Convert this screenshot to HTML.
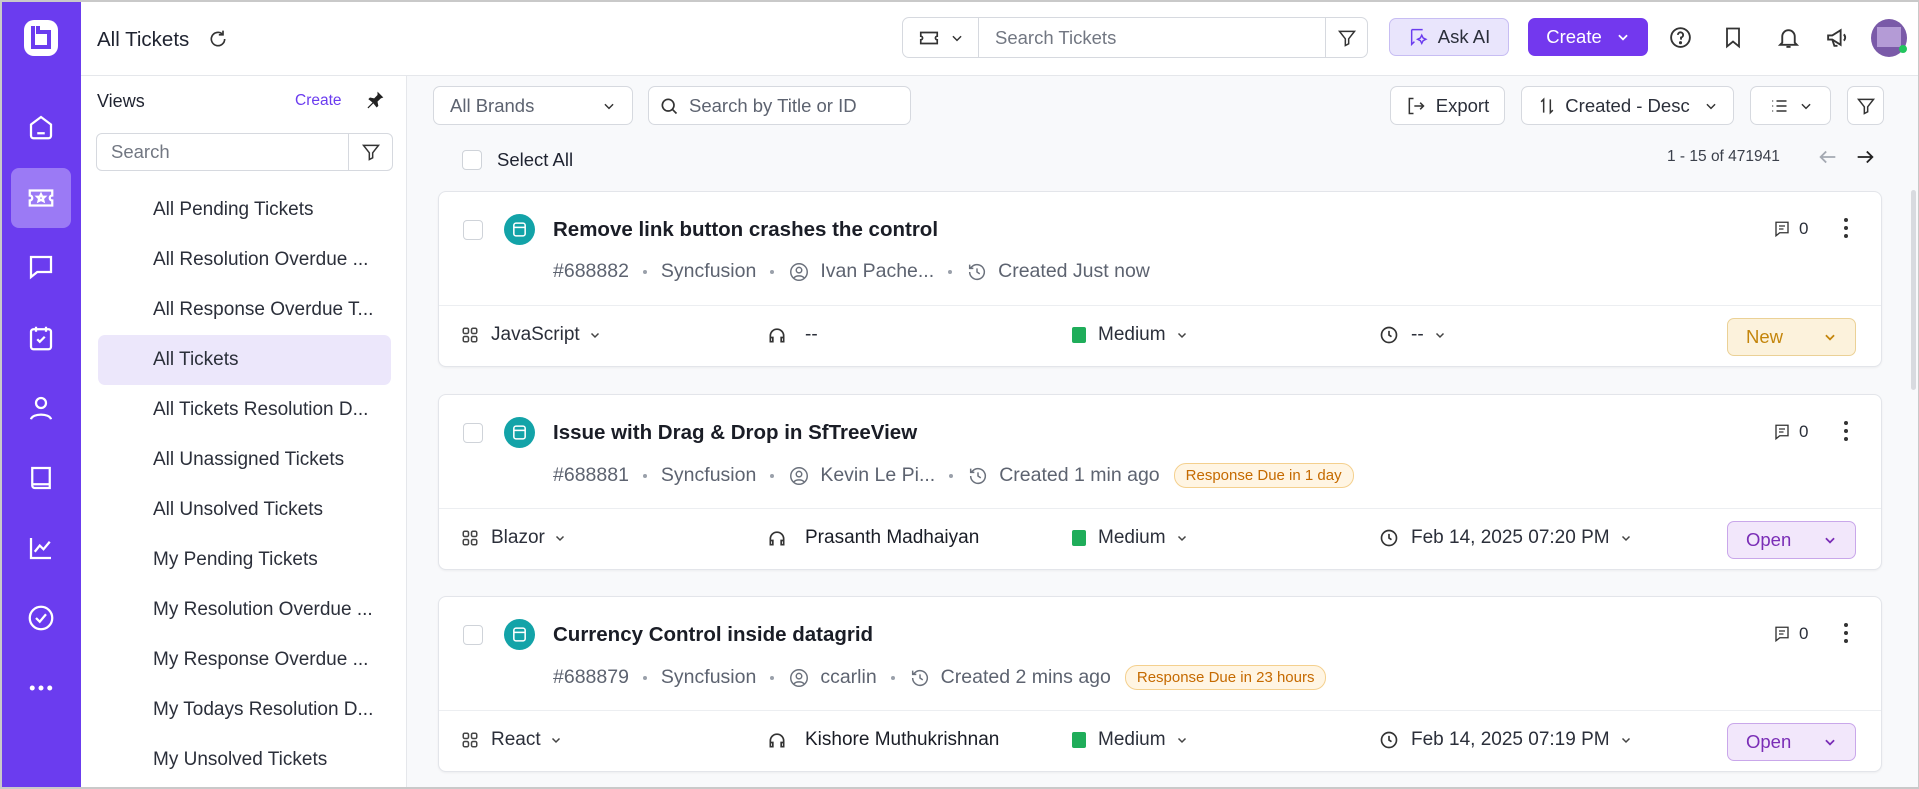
<!DOCTYPE html>
<html><head><meta charset="utf-8"><style>
*{box-sizing:border-box;margin:0;padding:0}
body{width:1919px;height:789px;overflow:hidden;font-family:"Liberation Sans",sans-serif;color:#1f2330;background:#fff;position:relative;font-size:17px}
.a{position:absolute}
svg{display:block}
.side{left:0;top:0;width:81px;height:789px;background:#6b3cef}
.side .ic{position:absolute;left:26px;width:30px;height:30px}
.hdr{left:81px;top:0;right:0;height:76px;border-bottom:1px solid #e5e7eb;background:#fff}
.btn{position:absolute;border:1px solid #d6d9df;border-radius:7px;background:#fff;display:flex;align-items:center;font-size:18.5px;color:#2b2f3a;white-space:nowrap}
.views{left:81px;top:76px;width:326px;height:713px;border-right:1px solid #e5e7eb;background:#fff}
.vi{position:absolute;left:17px;width:293px;height:50px;line-height:50px;padding-left:55px;font-size:19px;color:#2b2f3a;border-radius:7px;white-space:nowrap}
.main{left:407px;top:76px;right:0;bottom:0;background:#f8f9fb}
.card{position:absolute;left:438px;width:1444px;height:176px;background:#fff;border:1px solid #e3e5ea;border-radius:8px;box-shadow:0 1px 2px rgba(0,0,0,.05)}
.card .div{position:absolute;left:0;right:0;top:113px;border-top:1px solid #eceef1}
.cb{position:absolute;width:20px;height:20px;border:1px solid #cfd3d9;border-radius:4px;background:#fff}
.tic{position:absolute;left:65px;top:22px;width:31px;height:31px;border-radius:50%;background:#13a3a8}
.title{position:absolute;left:114px;top:26px;font-size:20.5px;font-weight:bold;color:#1a1d26;white-space:nowrap}
.meta{position:absolute;left:114px;top:68px;display:flex;align-items:center;font-size:19.5px;color:#5d6370;white-space:nowrap}
.meta .d{width:4px;height:4px;border-radius:50%;background:#9aa0aa;margin:0 14px}
.meta svg{margin-right:10px}
.badge{margin-left:14px;font-size:15px;color:#c56a00;background:#fff5e3;border:1px solid #f4d08e;border-radius:12px;padding:3px 11px}
.row{position:absolute;top:132px;font-size:19px;color:#2b2f3a;display:flex;align-items:center;white-space:nowrap}
.row svg{margin-right:12px}
.st{position:absolute;left:1288px;top:126px;width:129px;height:38px;border-radius:7px;display:flex;align-items:center;justify-content:space-between;padding:0 18px 0 18px;font-size:18.5px}
.new{background:#fcf2dc;border:1px solid #ebd196;color:#c4850b}
.open{background:#f2e7fb;border:1px solid #c9a7ea;color:#7a2db6}
.cm{position:absolute;left:1334px;top:27px;display:flex;align-items:center;font-size:17px;color:#2b2f3a}
.dots{position:absolute;left:1397px;top:24px}
</style></head><body>
<div style="position:absolute;inset:0;border:2px solid #c9c9c9;border-right-width:1px;pointer-events:none;z-index:9"></div>

<div class="a side">
 <svg class="a" style="left:22px;top:18px" width="38" height="40" viewBox="0 0 38 40"><rect x="2" y="2" width="34" height="36" rx="10" fill="#fff"/><path d="M11 8v21h16V14H16v-6" fill="none" stroke="#6b3cef" stroke-width="4"/></svg>
 <div class="a" style="left:11px;top:168px;width:60px;height:60px;border-radius:8px;background:#9b7af5"></div>
 <svg class="ic" style="top:112px" viewBox="0 0 24 24" fill="none" stroke="#fff" stroke-width="1.8"><path d="M4 10l8-6 8 6v9a2 2 0 0 1-2 2H6a2 2 0 0 1-2-2z"/><path d="M9 17h6"/></svg>
 <svg class="ic" style="top:183px" viewBox="0 0 24 24" fill="none" stroke="#fff" stroke-width="1.8"><path d="M3 6h18v4a2 2 0 0 0 0 4v4H3v-4a2 2 0 0 0 0-4z"/><path d="M12 9l1 2h2l-1.5 1.5.5 2-2-1-2 1 .5-2L9 11h2z"/></svg>
 <svg class="ic" style="top:252px" viewBox="0 0 24 24" fill="none" stroke="#fff" stroke-width="1.8"><path d="M4 4h16v12H9l-5 4z"/></svg>
 <svg class="ic" style="top:323px" viewBox="0 0 24 24" fill="none" stroke="#fff" stroke-width="1.8"><rect x="4" y="5" width="16" height="16" rx="2"/><path d="M8 3v4M16 3v4M9 13l2 2 4-4"/></svg>
 <svg class="ic" style="top:393px" viewBox="0 0 24 24" fill="none" stroke="#fff" stroke-width="1.8"><circle cx="12" cy="8" r="4"/><path d="M4 21c1-5 15-5 16 0"/></svg>
 <svg class="ic" style="top:463px" viewBox="0 0 24 24" fill="none" stroke="#fff" stroke-width="1.8"><path d="M5 4h14v16H7a2 2 0 0 1-2-2z"/><path d="M5 17h14"/></svg>
 <svg class="ic" style="top:533px" viewBox="0 0 24 24" fill="none" stroke="#fff" stroke-width="1.8"><path d="M4 4v16h16"/><path d="M7 15l4-5 3 3 5-6"/></svg>
 <svg class="ic" style="top:603px" viewBox="0 0 24 24" fill="none" stroke="#fff" stroke-width="1.8"><circle cx="12" cy="12" r="9"/><path d="M8 12l3 3 5-6"/></svg>
 <svg class="ic" style="top:673px" viewBox="0 0 24 24" fill="#fff"><circle cx="5" cy="12" r="2"/><circle cx="12" cy="12" r="2"/><circle cx="19" cy="12" r="2"/></svg>
</div>

<div class="a hdr">
 <div class="a" style="left:16px;top:28px;font-size:20.5px;color:#1f2330">All Tickets</div>
 <svg class="a" style="left:127px;top:29px" width="20" height="20" viewBox="0 0 24 24" fill="none" stroke="#333" stroke-width="2"><path d="M20 12a8 8 0 1 1-3-6.2"/><path d="M18 2v5h-5"/></svg>
</div>
<div class="btn" style="left:902px;top:17px;width:466px;height:41px">
 <div style="width:76px;height:100%;border-right:1px solid #d6d9df;display:flex;align-items:center;justify-content:center;gap:10px">
  <svg width="22" height="22" viewBox="0 0 24 24" fill="none" stroke="#333" stroke-width="1.8"><path d="M3 6h18v4a2 2 0 0 0 0 4v4H3v-4a2 2 0 0 0 0-4z"/></svg>
  <svg width="14" height="14" viewBox="0 0 24 24" fill="none" stroke="#333" stroke-width="2.5"><path d="M5 9l7 7 7-7"/></svg></div>
 <div style="flex:1;padding-left:16px;color:#727782">Search Tickets</div>
 <div style="width:42px;height:100%;border-left:1px solid #d6d9df;display:flex;align-items:center;justify-content:center"><svg width="20" height="20" viewBox="0 0 24 24" fill="none" stroke="#333" stroke-width="1.8"><path d="M3 4h18l-7 9v6l-4 2v-8z"/></svg></div>
</div>
<div class="btn" style="left:1389px;top:18px;width:120px;height:38px;background:#e9e5fc;border-color:#c7bdf3;justify-content:center;gap:8px">
 <svg width="22" height="22" viewBox="0 0 24 24" fill="none" stroke="#6b3cef" stroke-width="1.6"><path d="M4 4h12M4 4v16l3-3"/><path d="M15 10l1.5 3 3 1.5-3 1.5-1.5 3-1.5-3-3-1.5 3-1.5z"/></svg><span>Ask AI</span></div>
<div class="btn" style="left:1528px;top:18px;width:120px;height:38px;background:#7338ee;border-color:#7338ee;color:#fff;justify-content:center;gap:14px"><span>Create</span><svg width="14" height="14" viewBox="0 0 24 24" fill="none" stroke="#fff" stroke-width="3"><path d="M5 9l7 7 7-7"/></svg></div>
<svg class="a" style="left:1668px;top:25px" width="25" height="25" viewBox="0 0 24 24" fill="none" stroke="#333" stroke-width="1.8"><circle cx="12" cy="12" r="9"/><path d="M9.5 9.5a2.5 2.5 0 1 1 3 2.5v2"/><circle cx="12" cy="17" r=".6" fill="#333"/></svg>
<svg class="a" style="left:1721px;top:25px" width="24" height="25" viewBox="0 0 24 24" fill="none" stroke="#333" stroke-width="1.8"><path d="M6 3h12v18l-6-5-6 5z"/></svg>
<svg class="a" style="left:1776px;top:25px" width="25" height="25" viewBox="0 0 24 24" fill="none" stroke="#333" stroke-width="1.8"><path d="M6 17V11a6 6 0 0 1 12 0v6l2 2H4z"/><path d="M10 21h4"/></svg>
<svg class="a" style="left:1825px;top:25px" width="25" height="25" viewBox="0 0 24 24" fill="none" stroke="#333" stroke-width="1.8"><path d="M3 10v4h4l8 5V5L7 10z"/><path d="M7 14l2 6h3M18 9a4 4 0 0 1 0 6"/></svg>
<div class="a" style="left:1871px;top:19px;width:36px;height:38px;border-radius:50%;background:#7a5aa8;overflow:hidden"><div style="margin:8px 6px;width:24px;height:20px;background:#b49bd6"></div></div>
<div class="a" style="left:1899px;top:45px;width:8px;height:8px;border-radius:50%;background:#22c55e"></div>

<div class="a views">
 <div class="a" style="left:16px;top:15px;font-size:18px;color:#1f2330">Views</div>
 <div class="a" style="left:214px;top:16px;font-size:15.5px;color:#6b3cef">Create</div>
 <svg class="a" style="left:284px;top:14px" width="20" height="20" viewBox="0 0 24 24" fill="#222"><path d="M15 2l7 7-3 1-4 4 1 5-2 2-4-5-6 6-1-1 6-6-5-4 2-2 5 1 4-4z"/></svg>
 <div class="btn" style="left:15px;top:57px;width:297px;height:38px;border-radius:6px">
  <div style="flex:1;padding-left:14px;color:#727782">Search</div>
  <div style="width:44px;height:100%;border-left:1px solid #d6d9df;display:flex;align-items:center;justify-content:center"><svg width="20" height="20" viewBox="0 0 24 24" fill="none" stroke="#333" stroke-width="1.8"><path d="M3 4h18l-7 9v6l-4 2v-8z"/></svg></div></div>
 <div class="vi" style="top:109px">All Pending Tickets</div>
 <div class="vi" style="top:159px">All Resolution Overdue ...</div>
 <div class="vi" style="top:209px">All Response Overdue T...</div>
 <div class="vi" style="top:259px;background:#ece7fb">All Tickets</div>
 <div class="vi" style="top:309px">All Tickets Resolution D...</div>
 <div class="vi" style="top:359px">All Unassigned Tickets</div>
 <div class="vi" style="top:409px">All Unsolved Tickets</div>
 <div class="vi" style="top:459px">My Pending Tickets</div>
 <div class="vi" style="top:509px">My Resolution Overdue ...</div>
 <div class="vi" style="top:559px">My Response Overdue ...</div>
 <div class="vi" style="top:609px">My Todays Resolution D...</div>
 <div class="vi" style="top:659px">My Unsolved Tickets</div>
</div>

<div class="a main"></div>
<div class="btn" style="left:433px;top:86px;width:200px;height:39px;justify-content:space-between;padding:0 16px;color:#5d6370"><span>All Brands</span><svg width="14" height="14" viewBox="0 0 24 24" fill="none" stroke="#333" stroke-width="2.5"><path d="M5 9l7 7 7-7"/></svg></div>
<div class="btn" style="left:648px;top:86px;width:263px;height:39px;padding-left:10px;gap:10px;color:#5d6370"><svg width="20" height="20" viewBox="0 0 24 24" fill="none" stroke="#333" stroke-width="2"><circle cx="11" cy="11" r="7"/><path d="M16 16l5 5"/></svg><span>Search by Title or ID</span></div>
<div class="btn" style="left:1390px;top:86px;width:115px;height:39px;justify-content:center;gap:10px"><svg width="20" height="20" viewBox="0 0 24 24" fill="none" stroke="#333" stroke-width="1.8"><path d="M9 3H4v18h5M10 12h11M17 8l4 4-4 4"/></svg><span>Export</span></div>
<div class="btn" style="left:1521px;top:86px;width:213px;height:39px;justify-content:center;gap:8px"><svg width="20" height="20" viewBox="0 0 24 24" fill="none" stroke="#333" stroke-width="1.8"><path d="M8 20V4L5 7M16 4v16l3-3"/></svg><span>Created - Desc</span><svg width="14" height="14" viewBox="0 0 24 24" fill="none" stroke="#333" stroke-width="2.5" style="margin-left:6px"><path d="M5 9l7 7 7-7"/></svg></div>
<div class="btn" style="left:1750px;top:86px;width:81px;height:39px;justify-content:center;gap:10px"><svg width="20" height="20" viewBox="0 0 24 24" fill="none" stroke="#333" stroke-width="1.8"><path d="M9 6h12M9 12h12M9 18h12M4 6h1M4 12h1M4 18h1"/></svg><svg width="14" height="14" viewBox="0 0 24 24" fill="none" stroke="#333" stroke-width="2.5"><path d="M5 9l7 7 7-7"/></svg></div>
<div class="btn" style="left:1847px;top:86px;width:37px;height:39px;justify-content:center"><svg width="20" height="20" viewBox="0 0 24 24" fill="none" stroke="#333" stroke-width="1.8"><path d="M3 4h18l-7 9v6l-4 2v-8z"/></svg></div>

<div class="cb" style="left:462px;top:150px"></div>
<div class="a" style="left:497px;top:149px;font-size:18.5px;color:#1f2330">Select All</div>
<div class="a" style="left:1667px;top:148px;font-size:15.5px;color:#3b404b">1 - 15 of 471941</div>
<svg class="a" style="left:1817px;top:146px" width="22" height="22" viewBox="0 0 24 24" fill="none" stroke="#a4a9b2" stroke-width="2"><path d="M20 12H4M10 6l-6 6 6 6"/></svg>
<svg class="a" style="left:1854px;top:146px" width="22" height="22" viewBox="0 0 24 24" fill="none" stroke="#222" stroke-width="2"><path d="M4 12h16M14 6l6 6-6 6"/></svg>
<div class="a" style="left:1911px;top:190px;width:5px;height:200px;border-radius:3px;background:#d8dadf"></div>

<div class="card" style="top:191px">
 <div class="cb" style="left:24px;top:28px"></div>
 <div class="tic"><svg style="margin:7px" width="17" height="17" viewBox="0 0 24 24" fill="none" stroke="#fff" stroke-width="2.2"><rect x="4" y="3" width="16" height="18" rx="3"/><path d="M4 9h16"/></svg></div>
 <div class="title">Remove link button crashes the control</div>
 <div class="meta"><span>#688882</span><span class="d"></span><span>Syncfusion</span><span class="d"></span><svg width="22" height="22" viewBox="0 0 24 24" fill="none" stroke="#6b717c" stroke-width="1.6"><circle cx="12" cy="12" r="9"/><circle cx="12" cy="10" r="3"/><path d="M6.5 18.5c2-3 9-3 11 0"/></svg><span>Ivan Pache...</span><span class="d"></span><svg width="22" height="22" viewBox="0 0 24 24" fill="none" stroke="#6b717c" stroke-width="1.6"><path d="M4 12a8 8 0 1 0 2.5-5.8L4 8M4 4v4h4M12 8v4l3 2"/></svg><span>Created Just now</span></div>
 <div class="cm"><svg width="18" height="18" viewBox="0 0 24 24" fill="none" stroke="#333" stroke-width="1.8" style="margin-right:8px"><path d="M4 3h16v14H9l-5 4z"/><path d="M8 8h8M8 12h6"/></svg>0</div>
 <svg class="dots" width="20" height="24" viewBox="0 0 20 24" fill="#333"><circle cx="10" cy="4" r="2"/><circle cx="10" cy="12" r="2"/><circle cx="10" cy="20" r="2"/></svg>
 <div class="div"></div>
 <div class="row" style="left:22px"><svg width="18" height="18" viewBox="0 0 24 24" fill="none" stroke="#444" stroke-width="2"><rect x="3" y="3" width="7" height="7" rx="2"/><rect x="14" y="3" width="7" height="7" rx="2"/><rect x="3" y="14" width="7" height="7" rx="2"/><rect x="14" y="14" width="7" height="7" rx="2"/></svg>JavaScript<svg width="12" height="12" viewBox="0 0 24 24" fill="none" stroke="#444" stroke-width="3" style="margin-left:9px"><path d="M5 9l7 7 7-7"/></svg></div>
 <div class="row" style="left:328px"><svg width="20" height="20" viewBox="0 0 24 24" fill="none" stroke="#333" stroke-width="2"><path d="M4 18v-5a8 8 0 0 1 16 0v5M4 15h3v5H4zM17 15h3v5h-3z"/></svg><span style="margin-left:6px">--</span></div>
 <div class="row" style="left:633px"><span style="width:14px;height:16px;background:#1fad5a;border-radius:2px;margin-right:12px"></span>Medium<svg width="12" height="12" viewBox="0 0 24 24" fill="none" stroke="#444" stroke-width="3" style="margin-left:10px"><path d="M5 9l7 7 7-7"/></svg></div>
 <div class="row" style="left:940px"><svg width="20" height="20" viewBox="0 0 24 24" fill="none" stroke="#333" stroke-width="2"><circle cx="12" cy="12" r="9"/><path d="M12 7v5l3 2"/></svg>--<svg width="12" height="12" viewBox="0 0 24 24" fill="none" stroke="#444" stroke-width="3" style="margin-left:10px"><path d="M5 9l7 7 7-7"/></svg></div>
 <div class="st new"><span>New</span><svg width="14" height="14" viewBox="0 0 24 24" fill="none" stroke="#c4850b" stroke-width="3"><path d="M5 9l7 7 7-7"/></svg></div>
</div>

<div class="card" style="top:394px">
 <div class="cb" style="left:24px;top:28px"></div>
 <div class="tic"><svg style="margin:7px" width="17" height="17" viewBox="0 0 24 24" fill="none" stroke="#fff" stroke-width="2.2"><rect x="4" y="3" width="16" height="18" rx="3"/><path d="M4 9h16"/></svg></div>
 <div class="title">Issue with Drag &amp; Drop in SfTreeView</div>
 <div class="meta"><span>#688881</span><span class="d"></span><span>Syncfusion</span><span class="d"></span><svg width="22" height="22" viewBox="0 0 24 24" fill="none" stroke="#6b717c" stroke-width="1.6"><circle cx="12" cy="12" r="9"/><circle cx="12" cy="10" r="3"/><path d="M6.5 18.5c2-3 9-3 11 0"/></svg><span>Kevin Le Pi...</span><span class="d"></span><svg width="22" height="22" viewBox="0 0 24 24" fill="none" stroke="#6b717c" stroke-width="1.6"><path d="M4 12a8 8 0 1 0 2.5-5.8L4 8M4 4v4h4M12 8v4l3 2"/></svg><span>Created 1 min ago</span><span class="badge">Response Due in 1 day</span></div>
 <div class="cm"><svg width="18" height="18" viewBox="0 0 24 24" fill="none" stroke="#333" stroke-width="1.8" style="margin-right:8px"><path d="M4 3h16v14H9l-5 4z"/><path d="M8 8h8M8 12h6"/></svg>0</div>
 <svg class="dots" width="20" height="24" viewBox="0 0 20 24" fill="#333"><circle cx="10" cy="4" r="2"/><circle cx="10" cy="12" r="2"/><circle cx="10" cy="20" r="2"/></svg>
 <div class="div"></div>
 <div class="row" style="left:22px"><svg width="18" height="18" viewBox="0 0 24 24" fill="none" stroke="#444" stroke-width="2"><rect x="3" y="3" width="7" height="7" rx="2"/><rect x="14" y="3" width="7" height="7" rx="2"/><rect x="3" y="14" width="7" height="7" rx="2"/><rect x="14" y="14" width="7" height="7" rx="2"/></svg>Blazor<svg width="12" height="12" viewBox="0 0 24 24" fill="none" stroke="#444" stroke-width="3" style="margin-left:9px"><path d="M5 9l7 7 7-7"/></svg></div>
 <div class="row" style="left:328px"><svg width="20" height="20" viewBox="0 0 24 24" fill="none" stroke="#333" stroke-width="2"><path d="M4 18v-5a8 8 0 0 1 16 0v5M4 15h3v5H4zM17 15h3v5h-3z"/></svg><span style="margin-left:6px;color:#1a1d26">Prasanth Madhaiyan</span></div>
 <div class="row" style="left:633px"><span style="width:14px;height:16px;background:#1fad5a;border-radius:2px;margin-right:12px"></span>Medium<svg width="12" height="12" viewBox="0 0 24 24" fill="none" stroke="#444" stroke-width="3" style="margin-left:10px"><path d="M5 9l7 7 7-7"/></svg></div>
 <div class="row" style="left:940px"><svg width="20" height="20" viewBox="0 0 24 24" fill="none" stroke="#333" stroke-width="2"><circle cx="12" cy="12" r="9"/><path d="M12 7v5l3 2"/></svg>Feb 14, 2025 07:20 PM<svg width="12" height="12" viewBox="0 0 24 24" fill="none" stroke="#444" stroke-width="3" style="margin-left:10px"><path d="M5 9l7 7 7-7"/></svg></div>
 <div class="st open"><span>Open</span><svg width="14" height="14" viewBox="0 0 24 24" fill="none" stroke="#7a2db6" stroke-width="3"><path d="M5 9l7 7 7-7"/></svg></div>
</div>

<div class="card" style="top:596px">
 <div class="cb" style="left:24px;top:28px"></div>
 <div class="tic"><svg style="margin:7px" width="17" height="17" viewBox="0 0 24 24" fill="none" stroke="#fff" stroke-width="2.2"><rect x="4" y="3" width="16" height="18" rx="3"/><path d="M4 9h16"/></svg></div>
 <div class="title">Currency Control inside datagrid</div>
 <div class="meta"><span>#688879</span><span class="d"></span><span>Syncfusion</span><span class="d"></span><svg width="22" height="22" viewBox="0 0 24 24" fill="none" stroke="#6b717c" stroke-width="1.6"><circle cx="12" cy="12" r="9"/><circle cx="12" cy="10" r="3"/><path d="M6.5 18.5c2-3 9-3 11 0"/></svg><span>ccarlin</span><span class="d"></span><svg width="22" height="22" viewBox="0 0 24 24" fill="none" stroke="#6b717c" stroke-width="1.6"><path d="M4 12a8 8 0 1 0 2.5-5.8L4 8M4 4v4h4M12 8v4l3 2"/></svg><span>Created 2 mins ago</span><span class="badge">Response Due in 23 hours</span></div>
 <div class="cm"><svg width="18" height="18" viewBox="0 0 24 24" fill="none" stroke="#333" stroke-width="1.8" style="margin-right:8px"><path d="M4 3h16v14H9l-5 4z"/><path d="M8 8h8M8 12h6"/></svg>0</div>
 <svg class="dots" width="20" height="24" viewBox="0 0 20 24" fill="#333"><circle cx="10" cy="4" r="2"/><circle cx="10" cy="12" r="2"/><circle cx="10" cy="20" r="2"/></svg>
 <div class="div"></div>
 <div class="row" style="left:22px"><svg width="18" height="18" viewBox="0 0 24 24" fill="none" stroke="#444" stroke-width="2"><rect x="3" y="3" width="7" height="7" rx="2"/><rect x="14" y="3" width="7" height="7" rx="2"/><rect x="3" y="14" width="7" height="7" rx="2"/><rect x="14" y="14" width="7" height="7" rx="2"/></svg>React<svg width="12" height="12" viewBox="0 0 24 24" fill="none" stroke="#444" stroke-width="3" style="margin-left:9px"><path d="M5 9l7 7 7-7"/></svg></div>
 <div class="row" style="left:328px"><svg width="20" height="20" viewBox="0 0 24 24" fill="none" stroke="#333" stroke-width="2"><path d="M4 18v-5a8 8 0 0 1 16 0v5M4 15h3v5H4zM17 15h3v5h-3z"/></svg><span style="margin-left:6px;color:#1a1d26">Kishore Muthukrishnan</span></div>
 <div class="row" style="left:633px"><span style="width:14px;height:16px;background:#1fad5a;border-radius:2px;margin-right:12px"></span>Medium<svg width="12" height="12" viewBox="0 0 24 24" fill="none" stroke="#444" stroke-width="3" style="margin-left:10px"><path d="M5 9l7 7 7-7"/></svg></div>
 <div class="row" style="left:940px"><svg width="20" height="20" viewBox="0 0 24 24" fill="none" stroke="#333" stroke-width="2"><circle cx="12" cy="12" r="9"/><path d="M12 7v5l3 2"/></svg>Feb 14, 2025 07:19 PM<svg width="12" height="12" viewBox="0 0 24 24" fill="none" stroke="#444" stroke-width="3" style="margin-left:10px"><path d="M5 9l7 7 7-7"/></svg></div>
 <div class="st open"><span>Open</span><svg width="14" height="14" viewBox="0 0 24 24" fill="none" stroke="#7a2db6" stroke-width="3"><path d="M5 9l7 7 7-7"/></svg></div>
</div>
</body></html>
